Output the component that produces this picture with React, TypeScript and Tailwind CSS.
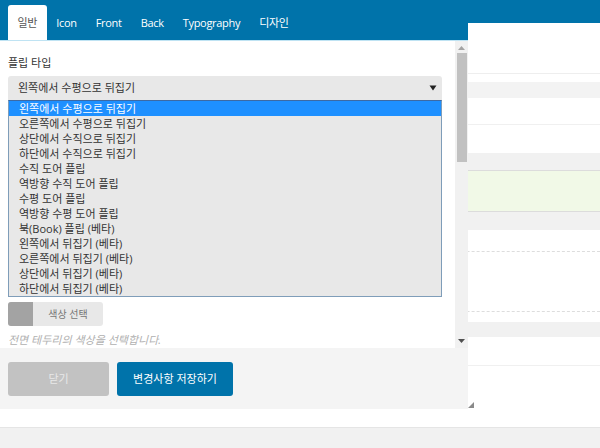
import React from "react";

const font = { fontFamily: '"Open Sans", "Noto Sans CJK KR", sans-serif' };

const items = [
  "왼쪽에서 수평으로 뒤집기",
  "오른쪽에서 수평으로 뒤집기",
  "상단에서 수직으로 뒤집기",
  "하단에서 수직으로 뒤집기",
  "수직 도어 플립",
  "역방향 수직 도어 플립",
  "수평 도어 플립",
  "역방향 수평 도어 플립",
  "북(Book) 플립 (베타)",
  "왼쪽에서 뒤집기 (베타)",
  "오른쪽에서 뒤집기 (베타)",
  "상단에서 뒤집기 (베타)",
  "하단에서 뒤집기 (베타)",
];

const tabs = ["일반", "Icon", "Front", "Back", "Typography", "디자인"];

function Background() {
  return (
    <div className="flex flex-col w-[600px] h-[448px] bg-white">
      <div className="h-[23px] bg-[#0073aa]" />
      <div className="h-[50px]" />
      <div className="h-px bg-[#eeeeee]" />
      <div className="h-[8px]" />
      <div className="h-[16px] bg-[#f3f3f3]" />
      <div className="h-[26px]" />
      <div className="h-px bg-[#f0f0f0]" />
      <div className="h-[28px]" />
      <div className="h-[17px] bg-[#f1f1f1]" />
      <div className="h-px bg-[#dcdcdc]" />
      <div className="h-[40px] bg-[#f1f9e7]" />
      <div className="h-px bg-[#dcdcdc]" />
      <div className="h-[18px] bg-[#f1f1f1]" />
      <div className="h-[21px]" />
      <div className="h-0 border-t border-dashed border-[#dddddd]" />
      <div className="h-[59px]" />
      <div className="h-0 border-t border-dashed border-[#dddddd]" />
      <div className="h-[10px]" />
      <div className="h-[15px] bg-[#f1f1f1]" />
      <div className="h-[28px]" />
      <div className="h-px bg-[#f0f0f0]" />
      <div className="h-[61px]" />
      <div className="flex-1 bg-[#f1f1f1] border-t border-[#e5e5e5]" />
    </div>
  );
}

function Dialog() {
  return (
    <div className="absolute left-0 top-0 w-[468px] h-[409px] flex flex-col">
      <div className="h-[40px] bg-[#0073aa] flex items-end pl-[8px]">
        {tabs.map((t, i) => (
          <div
            key={t}
            className={
              i === 0
                ? "h-[35px] px-[9.5px] pt-[1px] flex items-center bg-white text-[#555] rounded-t-[3px] text-[11px] tracking-[-0.3px]"
                : "h-[35px] px-[9.5px] pt-[1px] flex items-center text-white text-[11px] tracking-[-0.3px]"
            }
          >
            {t}
          </div>
        ))}
      </div>
      <div className="h-px bg-[#bfe3f3]" />
      <div className="flex-1 flex bg-white min-h-0">
        <div className="flex-1 pl-[8px] pr-[13px] flex flex-col">
          <div className="mt-[14px] text-[11px] leading-[16px] text-[#333]">플립 타입</div>
          <div className="mt-[5px] h-[25px] bg-[#e8e8e8] rounded-t-[3px] flex items-center justify-between pl-[10px] pr-[5px] text-[11px] text-[#333]">
            <span>왼쪽에서 수평으로 뒤집기</span>
            <svg width="8" height="6" viewBox="0 0 8 6">
              <path d="M0.5 0.5 H7.5 L4 5.5 Z" fill="#222" />
            </svg>
          </div>
          <div className="w-[434px] border border-[#7f9db9] border-t-[#3d6aa3] bg-[#e8e8e8] flex flex-col">
            {items.map((it, i) => (
              <div
                key={it}
                className={
                  i === 0
                    ? "h-[15px] leading-[15px] text-[11px] pl-[10px] bg-[#1e90ff] text-white"
                    : "h-[15px] leading-[15px] text-[11px] pl-[10px] text-[#333]"
                }
              >
                {it}
              </div>
            ))}
          </div>
          <div className="mt-[5px] w-[95px] h-[25px] bg-[#e8e8e8] rounded-[3px] flex overflow-hidden">
            <div className="w-[25px] bg-[#a3a3a3]" />
            <div className="flex-1 flex items-center justify-center text-[10px] text-[#777]">색상 선택</div>
          </div>
          <div className="mt-[6px] text-[11px] italic text-[#b0b0b0] leading-[16px]">
            전면 테두리의 색상을 선택합니다.
          </div>
        </div>
        <div className="w-[14px] bg-[#f1f1f1] flex flex-col items-center">
          <svg width="7" height="4" viewBox="0 0 7 4" className="mt-[5px]">
            <path d="M0 4 L3.5 0 L7 4 Z" fill="#a3a3a3" />
          </svg>
          <div className="mt-[3px] w-[10px] h-[109px] bg-[#c1c1c1]" />
          <div className="flex-1" />
          <svg width="7" height="4" viewBox="0 0 7 4" className="mb-[5px]">
            <path d="M0 0 L7 0 L3.5 4 Z" fill="#505050" />
          </svg>
        </div>
      </div>
      <div className="h-[61px] bg-[#f4f4f4] flex items-start pt-[14px] pl-[8px] gap-[8px]">
        <div className="w-[101px] h-[34px] bg-[#c2c2c2] rounded-[3px] flex items-center justify-center text-[11px] text-[#e8e8e8]">
          닫기
        </div>
        <div className="w-[116px] h-[34px] bg-[#0073aa] rounded-[3px] flex items-center justify-center text-[11px] text-white">
          변경사항 저장하기
        </div>
      </div>
      <svg width="6" height="6" viewBox="0 0 6 6" className="absolute left-[468px] top-[402px]">
        <path d="M6 0 L6 6 L0 6 Z" fill="#8a8a8a" />
      </svg>
    </div>
  );
}

export default function App() {
  return (
    <div className="relative w-[600px] h-[448px] overflow-hidden" style={font}>
      <Background />
      <Dialog />
    </div>
  );
}
